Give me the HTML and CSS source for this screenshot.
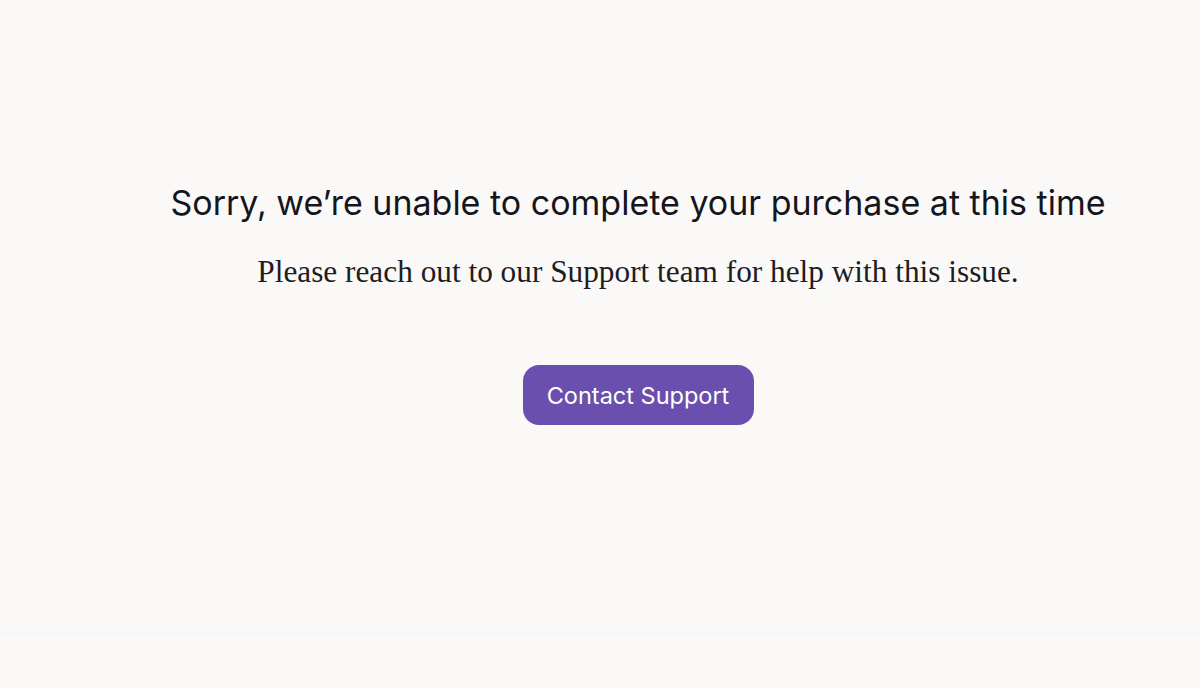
FILE: index.html
```html
<!DOCTYPE html>
<html>
<head>
<meta charset="utf-8">
<link rel="stylesheet" href="styles.css">
</head>
<body>
<main class="page">
  <section class="message">
    <h1 class="title">Sorry, we’re unable to complete your purchase at this time</h1>
    <p class="subtitle">Please reach out to our Support team for help with this issue.</p>
    <button class="cta">Contact Support</button>
  </section>
</main>
<div class="footer-line"></div>
</body>
</html>
```
FILE: styles.css
```css
html, body {
  margin: 0;
  padding: 0;
  background: #faf9f7;
}
.page {
  height: 632px;
  padding-left: 76px;
  display: flex;
  flex-direction: column;
  box-sizing: border-box;
}
.message {
  padding-top: 178px;
  display: flex;
  flex-direction: column;
  align-items: center;
}
.title {
  margin: 0;
  font-family: Inter, "Noto Sans", sans-serif;
  font-weight: 400;
  font-size: 34px;
  line-height: 50px;
  color: #15151d;
}
.subtitle {
  margin: 24px 0 0;
  font-family: "Liberation Serif", serif;
  font-size: 31.3px;
  line-height: 40px;
  color: #1d1d22;
}
.cta {
  margin-top: 73px;
  width: 231px;
  height: 60px;
  border: none;
  border-radius: 16px;
  background: #6b4fae;
  color: #ffffff;
  font-family: Inter, "Noto Sans", sans-serif;
  font-size: 23.5px;
}
.footer-line {
  height: 2px;
  background: #f7f7fb;
}
```
